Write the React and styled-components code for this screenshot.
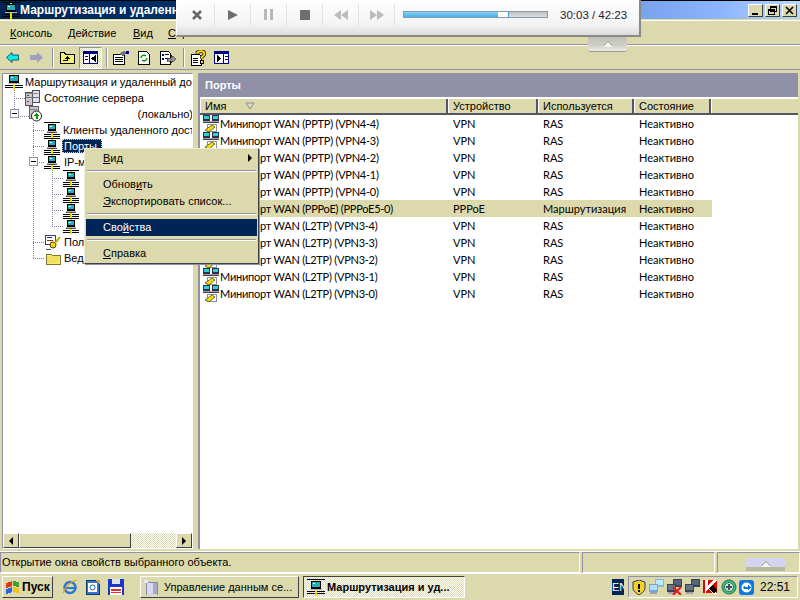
import React from "react";
import styled, { createGlobalStyle } from "styled-components";

const KHAKI = "#dcdaac";
const GREY = "#9090a8";
const NAVY = "#002456";
const dither = `repeating-conic-gradient(#fff 0 25%, ${KHAKI} 0 50%) 0 0 / 2px 2px`;

const GlobalStyle = createGlobalStyle`
  html, body { margin: 0; padding: 0; }
  body {
    width: 800px;
    height: 600px;
    overflow: hidden;
    background: ${KHAKI};
    font-family: "Liberation Sans", Arial, sans-serif;
    font-size: 11px;
    color: #000;
  }
  u { text-decoration: underline; }
`;

const ports = [
  ["Минипорт WAN (PPTP) (VPN4-4)", "VPN", "RAS"],
  ["Минипорт WAN (PPTP) (VPN4-3)", "VPN", "RAS"],
  ["Минипорт WAN (PPTP) (VPN4-2)", "VPN", "RAS"],
  ["Минипорт WAN (PPTP) (VPN4-1)", "VPN", "RAS"],
  ["Минипорт WAN (PPTP) (VPN4-0)", "VPN", "RAS"],
  ["Минипорт WAN (PPPoE) (PPPoE5-0)", "PPPoE", "Маршрутизация", true],
  ["Минипорт WAN (L2TP) (VPN3-4)", "VPN", "RAS"],
  ["Минипорт WAN (L2TP) (VPN3-3)", "VPN", "RAS"],
  ["Минипорт WAN (L2TP) (VPN3-2)", "VPN", "RAS"],
  ["Минипорт WAN (L2TP) (VPN3-1)", "VPN", "RAS"],
  ["Минипорт WAN (L2TP) (VPN3-0)", "VPN", "RAS"],
];

const Px = ({ w, h, children }) => (
  <svg width={w} height={h} viewBox={`0 0 ${w} ${h}`} shapeRendering="crispEdges" style={{ display: "block", flex: "none" }}>
    {children}
  </svg>
);

// monitor on a network line, used all over the tree
const NetIcon = () => (
  <Px w={16} h={16}>
    <rect x="0" y="0" width="16" height="1" fill="#000" />
    <rect x="7" y="1" width="2" height="1" fill="#f0e000" />
    <rect x="4" y="2" width="8" height="7" fill="#000" />
    <rect x="5" y="3" width="6" height="4" fill="#20b0b8" />
    <rect x="6" y="4" width="2" height="1" fill="#d8ffff" />
    <rect x="3" y="9" width="10" height="2" fill="#b8b8c0" />
    <rect x="3" y="10" width="10" height="1" fill="#505058" />
    <rect x="0" y="12" width="16" height="1" fill="#000" />
    <rect x="0" y="14" width="16" height="1" fill="#000" />
    <rect x="7" y="11" width="2" height="5" fill="#f0e000" />
  </Px>
);

const PortIcon = () => (
  <Px w={17} h={17}>
    <rect x="0" y="0" width="7" height="6" fill="#303048" />
    <rect x="1" y="1" width="5" height="3" fill="#30d0d8" />
    <rect x="9" y="0" width="7" height="6" fill="#303048" />
    <rect x="10" y="1" width="5" height="3" fill="#30d0d8" />
    <rect x="0" y="6" width="16" height="1" fill="#a0a0a8" />
    <rect x="0" y="7" width="16" height="1" fill="#404050" />
    <rect x="4" y="9" width="9" height="7" fill="#fff" stroke="#909098" />
    <polygon points="2,15 9,10 12,12 6,17" fill="#ecdc10" stroke="#403800" strokeWidth="0.7" shapeRendering="auto" />
  </Px>
);

const ServerIcon = () => (
  <Px w={16} h={17}>
    <rect x="1" y="3" width="7" height="13" fill="#c8c8d0" stroke="#505058" />
    <rect x="8" y="1" width="7" height="12" fill="#e0e0e8" stroke="#505058" />
    <rect x="2" y="8" width="13" height="1" fill="#707078" />
    <rect x="2" y="4" width="12" height="1" fill="#8c8c98" />
    <rect x="3" y="12" width="2" height="1" fill="#e02020" />
    <rect x="3" y="6" width="2" height="1" fill="#404048" />
  </Px>
);

const LocalIcon = () => (
  <Px w={14} h={16}>
    <rect x="1" y="0" width="9" height="12" fill="#c8c8d0" stroke="#606068" />
    <rect x="2" y="3" width="7" height="1" fill="#808088" />
    <circle cx="8.5" cy="10" r="5" fill="#fff" stroke="#202020" shapeRendering="auto" />
    <polygon points="8.5,6.5 11.5,10 9.5,10 9.5,12.5 7.5,12.5 7.5,10 5.5,10" fill="#00a000" />
  </Px>
);

const PolicyIcon = () => (
  <Px w={17} h={17}>
    <rect x="1" y="1" width="10" height="9" fill="#fff" stroke="#404080" />
    <rect x="3" y="3" width="5" height="1" fill="#2030a0" />
    <rect x="3" y="6" width="6" height="1" fill="#a02020" />
    <circle cx="9" cy="11" r="3" fill="#f0d800" stroke="#504000" shapeRendering="auto" />
    <line x1="11" y1="9" x2="16" y2="3" stroke="#c8b000" strokeWidth="2" shapeRendering="auto" />
    <line x1="2" y1="15" x2="7" y2="15" stroke="#505050" />
  </Px>
);

const FolderIcon = () => (
  <Px w={16} h={14}>
    <path d="M1 3h5l1 1h8v9H1z" fill="#f4ee70" stroke="#807830" />
    <rect x="2" y="5" width="12" height="7" fill="#f0e060" />
  </Px>
);

const ComputerIcon = () => (
  <Px w={18} h={17}>
    <rect x="0" y="0" width="18" height="1" fill="#000" />
    <rect x="8" y="1" width="2" height="1" fill="#f0e000" />
    <rect x="4" y="2" width="10" height="8" fill="#000" />
    <rect x="5" y="3" width="8" height="5" fill="#20b0b8" />
    <rect x="6" y="4" width="2" height="1" fill="#d8ffff" />
    <rect x="3" y="10" width="12" height="1" fill="#b8b8c0" />
    <rect x="0" y="12" width="18" height="1" fill="#000" />
    <rect x="0" y="14" width="18" height="1" fill="#000" />
    <rect x="8" y="11" width="2" height="6" fill="#f0e000" />
  </Px>
);

const BackIcon = () => (
  <Px w={13} h={11}>
    <polygon points="0.5,5.5 6,0.5 6,3 12.5,3 12.5,8 6,8 6,10.5" fill="#00f0f0" stroke="#003840" strokeWidth="0.8" shapeRendering="auto" />
  </Px>
);

const ForwardIcon = () => (
  <Px w={13} h={11}>
    <polygon points="13,5.5 7,0 7,3 0,3 0,8 7,8 7,11" fill="#a0a0c4" shapeRendering="auto" />
  </Px>
);

const FolderUpIcon = () => (
  <Px w={16} h={13}>
    <path d="M1.5 1.5h4l1 2h9v9h-14z" fill="#f8f070" stroke="#000" />
    <path d="M8 5l3 3h-2v2h-5v-1h4v-1h-2z" fill="#000" />
  </Px>
);

const PaneIcon = ({ right }) => (
  <Px w={15} h={13}>
    <rect x="0.5" y="0.5" width="14" height="12" fill="#fff" stroke="#000080" />
    <rect x="1" y="1" width="13" height="2" fill="#000080" />
    <rect x={right ? 9 : 6} y="1" width="1" height="11" fill="#000080" />
    {right ? (
      <polygon points="3,4 7,7.500 3,11" fill="#000" />
    ) : (
      <polygon points="13,4 8,7.500 13,11" fill="#000" />
    )}
    <rect x={right ? 11 : 2} y="5" width="3" height="1" fill="#000080" />
    <rect x={right ? 11 : 2} y="8" width="3" height="1" fill="#000080" />
  </Px>
);

const PropsIcon = () => (
  <Px w={16} h={14}>
    <rect x="0.5" y="3.5" width="11" height="10" fill="#fff" stroke="#000" />
    <rect x="2" y="6" width="8" height="1" fill="#000" />
    <rect x="2" y="8" width="8" height="1" fill="#000" />
    <rect x="2" y="10" width="8" height="1" fill="#000" />
    <polygon points="6,3 11,0 14,2 10,5" fill="#707080" />
    <rect x="13" y="0" width="3" height="3" fill="#000090" />
  </Px>
);

const RefreshIcon = () => (
  <Px w={12} h={14}>
    <path d="M0.5 0.500h8l3 3v10h-11z" fill="#fff" stroke="#000" />
    <path d="M3 7a3 3 0 0 1 5-2M9 7a3 3 0 0 1-5 2" fill="none" stroke="#009000" strokeWidth="1.4" shapeRendering="auto" />
  </Px>
);

const ExportIcon = () => (
  <Px w={16} h={14}>
    <path d="M0.5 0.500h8l2 2v11h-10z" fill="#fff" stroke="#000" />
    <rect x="2" y="3" width="2" height="2" fill="#0000a0" />
    <rect x="2" y="7" width="2" height="2" fill="#0000a0" />
    <rect x="5" y="3" width="4" height="1" fill="#000" />
    <rect x="5" y="7" width="3" height="1" fill="#000" />
    <polygon points="7,7 11,7 11,4 16,8 11,12 11,10 7,10" fill="#909098" stroke="#000" strokeWidth="0.5" />
  </Px>
);

const HelpIcon = () => (
  <Px w={15} h={16}>
    <path d="M0.5 4.500h8l2 2v9h-10z" fill="#fff" stroke="#000" />
    <rect x="2" y="8" width="5" height="1" fill="#000" />
    <rect x="2" y="10" width="5" height="1" fill="#000" />
    <rect x="2" y="12" width="5" height="1" fill="#000" />
    <path d="M6 3.500C6 1 13 0 13.500 3.500C13.500 6 10.500 6 10.500 8.500" fill="none" stroke="#000" strokeWidth="3.400" shapeRendering="auto" />
    <path d="M6 3.500C6 1 13 0 13.500 3.500C13.500 6 10.500 6 10.500 8.500" fill="none" stroke="#ffe000" strokeWidth="1.800" shapeRendering="auto" />
    <rect x="9" y="10" width="3" height="3" fill="#ffe000" stroke="#000" />
  </Px>
);

const FlagIcon = () => (
  <Px w={15} h={14}>
    <path d="M1 3l6-2v5l-6 2z" fill="#e03818" />
    <path d="M8 1l6 1v5l-6-1z" fill="#40a030" />
    <path d="M1 9l6-2v5l-6 2z" fill="#2868d8" />
    <path d="M8 7l6 1v5l-6-1z" fill="#f0c020" />
  </Px>
);

const IeIcon = () => (
  <Px w={16} h={16}>
    <circle cx="8" cy="8.500" r="5.500" fill="none" stroke="#2878d8" strokeWidth="2.500" shapeRendering="auto" />
    <rect x="4" y="8" width="9" height="1.500" fill="#2878d8" />
    <path d="M1 14C3 8 9 2 15 1" fill="none" stroke="#e8a020" strokeWidth="1.200" shapeRendering="auto" />
  </Px>
);

const OutlookIcon = () => (
  <Px w={16} h={16}>
    <rect x="1" y="1" width="13" height="14" fill="#3078d0" stroke="#103870" />
    <rect x="3" y="4" width="9" height="9" fill="#fff" />
    <circle cx="7.500" cy="8.500" r="2.500" fill="none" stroke="#2060c0" shapeRendering="auto" />
    <polygon points="10,1 15,1 15,6" fill="#f0a030" />
  </Px>
);

const FloppyIcon = () => (
  <Px w={16} h={16}>
    <rect x="0" y="0" width="16" height="16" fill="#1838c8" />
    <rect x="4" y="0" width="8" height="5" fill="#e0e0e8" />
    <rect x="2" y="8" width="12" height="8" fill="#fff" />
    <rect x="3" y="10" width="10" height="2" fill="#e03030" />
    <rect x="3" y="13" width="10" height="1" fill="#e03030" />
  </Px>
);

const MmcIcon = () => (
  <Px w={15} h={15}>
    <rect x="2" y="2" width="11" height="13" fill="#d8d8f0" stroke="#8888a8" />
    <rect x="9" y="3" width="4" height="11" fill="#a8a8c8" />
    <rect x="0" y="0" width="4" height="3" fill="#e8e8f8" />
  </Px>
);

const ShieldIcon = () => (
  <Px w={15} h={15}>
    <path d="M7 0l6 2v6c0 3-3 5-6 7-3-2-6-4-6-7V2z" fill="#f4d020" stroke="#283880" shapeRendering="auto" />
    <rect x="6" y="4" width="2" height="5" fill="#000" />
    <rect x="6" y="10" width="2" height="2" fill="#000" />
  </Px>
);

const TrayNetIcon = ({ light, cross }) => (
  <Px w={16} h={16}>
    <rect x="6" y="0" width="9" height="8" fill={light ? "#80b8e8" : "#404050"} />
    <rect x="7" y="1" width="7" height="5" fill={light ? "#c0e8ff" : "#506878"} />
    <rect x="0" y="5" width="9" height="8" fill={light ? "#70a8d8" : "#404050"} />
    <rect x="1" y="6" width="7" height="5" fill={light ? "#b0e0f8" : "#607888"} />
    <rect x="1" y="13" width="7" height="2" fill="#a0a0a8" />
    {cross && <path d="M6 8l8 8M14 8l-8 8" stroke="#e02020" strokeWidth="2.200" shapeRendering="auto" />}
  </Px>
);

const KasperskyIcon = () => (
  <Px w={16} h={15}>
    <rect x="0" y="0" width="14" height="13" fill="#e80000" />
    <polygon points="2,0 5,0 5,5 10,0 14,0 7,7 14,14 10,14 5,9 2,14" fill="#fff" />
    <polygon points="6,8 10,5 14,10 11,14" fill="#000" />
  </Px>
);

const GreenIcon = () => (
  <Px w={16} h={16}>
    <circle cx="8" cy="8" r="7" fill="#40c080" stroke="#207050" shapeRendering="auto" />
    <circle cx="8" cy="8" r="4.500" fill="#d0e8d8" stroke="#307050" shapeRendering="auto" />
    <path d="M5 8h6M8 5v6" stroke="#405060" strokeWidth="1.500" />
  </Px>
);

const TeamIcon = () => (
  <Px w={15} h={15}>
    <rect x="0" y="0" width="15" height="15" rx="3" fill="#1078e0" shapeRendering="auto" />
    <circle cx="7.500" cy="7.500" r="5" fill="#fff" shapeRendering="auto" />
    <polygon points="3.500,7.500 6,5 6,6.500 9,6.500 9,5 11.500,7.500 9,10 9,8.500 6,8.500 6,10" fill="#1078e0" />
  </Px>
);

const Screen = styled.div`
  position: relative;
  width: 800px;
  height: 600px;
  display: flex;
  flex-direction: column;
  background: ${KHAKI};
  overflow: hidden;
`;

const TitleBar = styled.div`
  height: 19px;
  flex: none;
  display: flex;
  align-items: center;
  padding: 0 3px 0 2px;
  border-top: 1px solid #000;
  box-sizing: border-box;
  background: linear-gradient(90deg, #002456 0%, #00306a 25%, #5080c8 60%, #8cb4ff 90%, #b8d8ff 100%);
  color: #fff;
  font-weight: bold;
  font-size: 12px;
`;

const TitleText = styled.span`
  flex: 1;
  white-space: nowrap;
`;

const WinButton = styled.div`
  width: 15px;
  height: 13px;
  margin-left: 2px;
  background: ${KHAKI};
  border: 1px solid;
  border-color: #fff #404040 #404040 #fff;
  box-sizing: border-box;
  display: flex;
  align-items: center;
  justify-content: center;
`;

const Band = styled.div`
  height: ${(p) => p.$h}px;
  flex: none;
  margin: ${(p) => p.$m || "0"};
  display: flex;
  align-items: center;
  box-sizing: border-box;
  border-top: 1px solid #fff;
  border-bottom: 1px solid ${GREY};
  padding-left: ${(p) => p.$pl || 0}px;
`;

const MenuItem = styled.span`
  width: ${(p) => p.$w}px;
  flex: none;
  white-space: nowrap;
`;

const ToolSlot = styled.div`
  flex: none;
  width: ${(p) => p.$w}px;
  height: 22px;
  display: flex;
  align-items: center;
  justify-content: center;
  box-sizing: border-box;
  ${(p) =>
    p.$active &&
    `background: ${dither};
     border: 1px solid;
     border-color: ${GREY} #fff #fff ${GREY};`}
`;

const ToolSep = styled.div`
  flex: none;
  width: 2px;
  height: 19px;
  margin: 0 ${(p) => p.$r ?? 0}px 0 ${(p) => p.$l ?? 0}px;
  background: linear-gradient(90deg, ${GREY} 50%, #fff 50%);
`;

const Main = styled.div`
  flex: 1;
  min-height: 0;
  display: flex;
  margin: 3px 2px 2px;
  gap: 5px;
`;

const TreePane = styled.div`
  position: relative;
  width: 191px;
  flex: none;
  display: flex;
  flex-direction: column;
  box-sizing: border-box;
  background: #fff;
  border: 1px solid;
  border-color: ${GREY} #fff #fff ${GREY};
  overflow: hidden;
`;

const TreeBody = styled.div`
  position: relative;
  flex: 1;
  min-height: 0;
`;

const TreeLines = styled.svg`
  position: absolute;
  left: 0;
  top: 0;
`;

const TreeRow = styled.div`
  position: relative;
  height: ${(p) => p.$h || 16}px;
  display: flex;
  align-items: center;
  gap: ${(p) => p.$gap ?? 3}px;
  padding-left: ${(p) => p.$indent}px;
  white-space: nowrap;
`;

const Expander = styled.span`
  position: absolute;
  left: ${(p) => p.$x}px;
  top: 3px;
  width: 9px;
  height: 9px;
  box-sizing: border-box;
  background: #fff;
  border: 1px solid ${GREY};
  &::after {
    content: "";
    position: absolute;
    left: 1px;
    top: 3px;
    width: 5px;
    height: 1px;
    background: #000;
  }
`;

const TreeLabel = styled.span`
  padding: 1px 2px;
  ${(p) =>
    p.$selected &&
    `background: ${NAVY};
     color: #fff;
     padding-right: 5px;
     outline: 1px dotted #dcdaac;
     outline-offset: -1px;`}
`;

const LocalLabel = styled.span`
  position: absolute;
  right: -1px;
`;

const ScrollBar = styled.div`
  height: 15px;
  flex: none;
  display: flex;
  background: ${dither};
`;

const ScrollButton = styled.div`
  width: ${(p) => p.$w || 16}px;
  flex: none;
  margin-left: ${(p) => (p.$end ? "auto" : "0")};
  box-sizing: border-box;
  background: ${KHAKI};
  border: 1px solid;
  border-color: #fff #404048 #404048 #fff;
  display: flex;
  align-items: center;
  justify-content: center;
`;

const ScrollArrow = styled.i`
  width: 0;
  height: 0;
  border-style: solid;
  border-width: 4px 0 4px 4px;
  border-color: transparent transparent transparent #000;
  transform: ${(p) => (p.$left ? "scaleX(-1)" : "none")};
`;

const ListPane = styled.div`
  flex: 1;
  min-width: 0;
  display: flex;
  flex-direction: column;
  background: #fff;
  border-left: 2px solid ${GREY};
`;

const PaneHeader = styled.div`
  height: 23px;
  flex: none;
  display: flex;
  align-items: center;
  padding: 0 0 1px 5px;
  box-sizing: content-box;
  background: ${GREY};
  color: #fff;
  font-weight: bold;
  border-bottom: 1px solid #fff;
`;

const ColumnRow = styled.div`
  display: grid;
  grid-template-columns: 248px 90px 96px 77px 1fr;
  height: 17px;
  flex: none;
  background: ${KHAKI};
  box-sizing: border-box;
  border-top: 1px solid #fff;
  border-bottom: 2px solid #555568;
`;

const Column = styled.div`
  display: flex;
  align-items: center;
  gap: 19px;
  padding-left: 5px;
  border-right: 2px solid #555568;
  box-shadow: inset 1px 0 0 #fff;
  &:last-child { border-right: 0; }
`;

const ListRow = styled.div`
  display: grid;
  grid-template-columns: 248px 90px 96px 78px;
  height: 17px;
  align-items: center;
  width: 512px;
  background: ${(p) => (p.$hl ? KHAKI : "transparent")};
  white-space: nowrap;
`;

const NameCell = styled.div`
  display: flex;
  align-items: center;
  padding-left: 3px;
  font-family: Lato, "Liberation Sans", Arial, sans-serif;
  letter-spacing: -0.25px;
`;

const Cell = styled.div`
  padding-left: 5px;
  font-family: Lato, "Liberation Sans", Arial, sans-serif;
`;

const StatusBar = styled.div`
  height: 23px;
  flex: none;
  display: grid;
  grid-template-columns: 580px 133px 1fr;
  gap: 2px;
  border-top: 1px solid #fff;
  border-bottom: 1px solid #fff;
  box-sizing: border-box;
`;

const StatusCell = styled.div`
  display: flex;
  align-items: center;
  padding: 0 0 1px 1px;
  border: 1px solid;
  border-color: ${GREY} #fff #fff ${GREY};
  white-space: nowrap;
`;

const Taskbar = styled.div`
  height: 26px;
  flex: none;
  display: flex;
  align-items: center;
  padding-left: 2px;
`;

const Raised = styled.div`
  height: 22px;
  box-sizing: border-box;
  display: flex;
  align-items: center;
  flex: none;
  background: ${KHAKI};
  border: 1px solid;
  border-color: #fff #404048 #404048 #fff;
`;

const StartButton = styled(Raised)`
  width: 51px;
  gap: 2px;
  padding-left: 2px;
  font-weight: bold;
  font-size: 12px;
`;

const Quick = styled.div`
  display: flex;
  gap: 7px;
  margin: 0 12px 0 9px;
  width: 66px;
  flex: none;
`;

const TaskButton = styled(Raised)`
  width: ${(p) => p.$w}px;
  margin-right: 4px;
  gap: ${(p) => (p.$active ? 2 : 5)}px;
  padding-left: 3px;
  white-space: nowrap;
  ${(p) =>
    p.$active &&
    `background: ${dither};
     border-color: #404048 #fff #fff #404048;
     font-weight: bold;`}
`;

const Lang = styled.div`
  margin-left: auto;
  width: 12px;
  height: 16px;
  overflow: hidden;
  background: ${NAVY};
  color: #fff;
  font-size: 11px;
  line-height: 16px;
  flex: none;
`;

const Tray = styled.div`
  width: 170px;
  height: 22px;
  box-sizing: border-box;
  margin: 0 2px 0 4px;
  padding-left: 3px;
  display: flex;
  align-items: center;
  gap: 2px;
  border: 1px solid;
  border-color: ${GREY} #fff #fff ${GREY};
`;

const Clock = styled.span`
  margin-left: auto;
  margin-right: 7px;
  font-size: 12px;
`;

const Player = styled.div`
  position: absolute;
  left: 176px;
  top: -2px;
  width: 465px;
  height: 39px;
  box-sizing: border-box;
  display: flex;
  align-items: center;
  padding: 0 0 5px 2px;
  background: linear-gradient(180deg, #ffffff 0%, #f4f4f4 70%, #dcdcdc 100%);
  border: 1px solid #fff;
  border-right: 2px solid #8a8a84;
  border-bottom: 2px solid #8a8a84;
  z-index: 3;
`;

const PlayerButton = styled.div`
  width: 36px;
  height: 22px;
  flex: none;
  display: flex;
  align-items: center;
  justify-content: center;
  box-sizing: border-box;
  border-right: 1px solid #e2e2e2;
  &:last-of-type { border-right: 0; }
`;

const Progress = styled.div`
  width: 145px;
  height: 7px;
  flex: none;
  margin-left: 8px;
  overflow: hidden;
  box-sizing: border-box;
  border: 1px solid #7f9db0;
  background: linear-gradient(180deg, #c0c0c0, #dedede);
  display: flex;
`;

const ProgressPart = styled.div`
  height: 100%;
  background: ${(p) => p.$color};
`;

const TimeLabel = styled.span`
  margin-left: 12px;
  font-size: 11.5px;
  color: #202030;
  white-space: nowrap;
`;

const PullTab = styled.div`
  position: absolute;
  left: 588px;
  top: 37px;
  width: 39px;
  height: 15px;
  box-sizing: border-box;
  background: linear-gradient(180deg, #c0c0b8 0%, #d0d0c8 60%, #ecece4 100%);
  border-bottom: 1px solid #9a9a90;
  border-radius: 0 0 3px 3px;
  display: flex;
  align-items: center;
  justify-content: center;
`;

const TabTriangle = styled.i`
  width: 0;
  height: 0;
  border-style: solid;
  border-width: 0 5px 5px 5px;
  border-color: transparent transparent #f4f4f4 transparent;
  filter: drop-shadow(0 -1px 0 #9a9a90);
`;

const StatusTab = styled.div`
  position: absolute;
  left: 746px;
  top: 558px;
  width: 39px;
  height: 13px;
  box-sizing: border-box;
  border-radius: 3px 3px 0 0;
  background: linear-gradient(180deg, #d4d4f0 0 70%, #b8b8a0 70%);
  display: flex;
  align-items: center;
  justify-content: center;
`;

const ContextMenu = styled.div`
  position: absolute;
  left: 84px;
  top: 148px;
  width: 175px;
  height: 116px;
  box-sizing: border-box;
  padding: 1px;
  background: ${KHAKI};
  border: 1px solid;
  border-color: #eeeedd #404048 #404048 #eeeedd;
  box-shadow: 1px 1px 0 ${GREY};
  z-index: 2;
`;

const MenuRow = styled.div`
  position: relative;
  height: 17px;
  line-height: 17px;
  padding-left: 17px;
  white-space: nowrap;
  ${(p) => p.$selected && `background: ${NAVY}; color: #fff;`}
`;

const MenuSep = styled.div`
  height: 2px;
  margin: ${(p) => p.$m} 1px ${(p) => p.$b};
  background: linear-gradient(180deg, ${GREY} 50%, #fff 50%);
`;

const SubArrow = styled.i`
  position: absolute;
  right: 5px;
  top: 4px;
  width: 0;
  height: 0;
  border-style: solid;
  border-width: 4px 0 4px 4px;
  border-color: transparent transparent transparent #000;
`;

export default function App() {
  return (
    <>
      <GlobalStyle />
      <Screen>
        <TitleBar>
          <ComputerIcon />
          <TitleText>Маршрутизация и удаленный доступ</TitleText>
          <WinButton>
            <Px w={9} h={9}><rect x="1" y="7" width="6" height="2" fill="#000" /></Px>
          </WinButton>
          <WinButton>
            <Px w={9} h={9}>
              <path d="M2.5 0.5h6v5h-6zM0.5 3.5h6v5h-6z" fill="none" stroke="#000" />
              <rect x="0" y="3" width="7" height="2" fill="#000" />
              <rect x="2" y="0" width="7" height="2" fill="#000" />
            </Px>
          </WinButton>
          <WinButton>
            <Px w={9} h={9}>
              <path d="M1 1l7 7M8 1l-7 7" stroke="#000" strokeWidth="1.6" shapeRendering="auto" />
            </Px>
          </WinButton>
        </TitleBar>
        <Band $h={25} $m="1px 0 0" $pl={10}>
          <MenuItem $w={58}><u>К</u>онсоль</MenuItem>
          <MenuItem $w={65}><u>Д</u>ействие</MenuItem>
          <MenuItem $w={35}><u>В</u>ид</MenuItem>
          <MenuItem $w={50}><u>С</u>правка</MenuItem>
        </Band>
        <Band $h={25} $pl={5}>
          <ToolSlot $w={15}><BackIcon /></ToolSlot>
          <ToolSlot $w={32}><ForwardIcon /></ToolSlot>
          <ToolSep />
          <ToolSlot $w={25}><FolderUpIcon /></ToolSlot>
          <ToolSlot $w={23} $active><PaneIcon /></ToolSlot>
          <ToolSep $l={4} $r={4} />
          <ToolSlot $w={17}><PropsIcon /></ToolSlot>
          <ToolSlot $w={30}><RefreshIcon /></ToolSlot>
          <ToolSlot $w={17}><ExportIcon /></ToolSlot>
          <ToolSep $l={7} $r={4} />
          <ToolSlot $w={18}><HelpIcon /></ToolSlot>
          <ToolSlot $w={28}><PaneIcon right /></ToolSlot>
        </Band>
        <Main>
          <TreePane>
            <TreeBody>
              <TreeLines width="190" height="200" viewBox="0 0 190 200" shapeRendering="crispEdges">
                <g stroke="#808098" strokeDasharray="1 1" fill="none">
                  <path d="M11 16V38M11 24H22M11 42H26" />
                  <path d="M30 49V185M30 56H41M30 72H41M30 88H41M30 168H41M30 184H41" />
                  <path d="M49 96V152M49 104H60M49 120H60M49 136H60M49 152H60" />
                </g>
              </TreeLines>
              <TreeRow $indent={2} $gap={0} $h={15}><ComputerIcon /><TreeLabel>Маршрутизация и удаленный доступ</TreeLabel></TreeRow>
              <TreeRow $indent={21} $gap={2} $h={17}><ServerIcon /><TreeLabel>Состояние сервера</TreeLabel></TreeRow>
              <TreeRow $indent={25} $h={16}>
                <Expander $x={7} />
                <LocalIcon />
                <LocalLabel>(локально)</LocalLabel>
              </TreeRow>
              <TreeRow $indent={41} $gap={1}><NetIcon /><TreeLabel>Клиенты удаленного доступа</TreeLabel></TreeRow>
              <TreeRow $indent={41} $gap={2}><NetIcon /><TreeLabel $selected>Порты</TreeLabel></TreeRow>
              <TreeRow $indent={41} $gap={2}>
                <Expander $x={26} />
                <NetIcon />
                <TreeLabel>IP-маршрутизация</TreeLabel>
              </TreeRow>
              {[0, 1, 2, 3].map((i) => (
                <TreeRow key={i} $indent={60}><NetIcon /></TreeRow>
              ))}
              <TreeRow $indent={41} $gap={1}><PolicyIcon /><TreeLabel>Политика</TreeLabel></TreeRow>
              <TreeRow $indent={42} $gap={1}><FolderIcon /><TreeLabel>Ведение журнала</TreeLabel></TreeRow>
            </TreeBody>
            <ScrollBar>
              <ScrollButton><ScrollArrow $left /></ScrollButton>
              <ScrollButton $w={112} />
              <ScrollButton $end><ScrollArrow /></ScrollButton>
            </ScrollBar>
          </TreePane>
          <ListPane>
            <PaneHeader>Порты</PaneHeader>
            <ColumnRow>
              <Column>
                Имя
                <svg width="10" height="8" viewBox="0 0 10 8"><path d="M1 1h8L5 7z" fill="#dcdaac" stroke="#8c8ca4" /></svg>
              </Column>
              <Column>Устройство</Column>
              <Column>Используется</Column>
              <Column>Состояние</Column>
              <Column />
            </ColumnRow>
            {ports.map(([name, device, used, hl]) => (
              <ListRow key={name} $hl={hl}>
                <NameCell><PortIcon />{name}</NameCell>
                <Cell>{device}</Cell>
                <Cell>{used}</Cell>
                <Cell>Неактивно</Cell>
              </ListRow>
            ))}
          </ListPane>
        </Main>
        <StatusBar>
          <StatusCell>Открытие окна свойств выбранного объекта.</StatusCell>
          <StatusCell />
          <StatusCell />
        </StatusBar>
        <Taskbar>
          <StartButton><FlagIcon />Пуск</StartButton>
          <Quick><IeIcon /><OutlookIcon /><FloppyIcon /></Quick>
          <TaskButton $w={159}><MmcIcon />Управление данным се...</TaskButton>
          <TaskButton $w={162} $active><ComputerIcon />Маршрутизация и уд...</TaskButton>
          <Lang>EN</Lang>
          <Tray>
            <ShieldIcon />
            <TrayNetIcon light />
            <TrayNetIcon cross />
            <TrayNetIcon />
            <KasperskyIcon />
            <GreenIcon />
            <TeamIcon />
            <Clock>22:51</Clock>
          </Tray>
        </Taskbar>

        <Player>
          <PlayerButton>
            <svg width="12" height="12" viewBox="0 0 12 12"><path d="M2 2l8 8M10 2l-8 8" stroke="#666" strokeWidth="2.6" /></svg>
          </PlayerButton>
          <PlayerButton>
            <svg width="10" height="12" viewBox="0 0 10 12"><path d="M0 1l10 5-10 5z" fill="#6e6e6e" /></svg>
          </PlayerButton>
          <PlayerButton>
            <svg width="9" height="11" viewBox="0 0 9 11"><path d="M0 0h3v11H0zM6 0h3v11H6z" fill="#b8b8b8" /></svg>
          </PlayerButton>
          <PlayerButton>
            <svg width="10" height="10" viewBox="0 0 10 10"><rect width="10" height="10" fill="#6e6e6e" /></svg>
          </PlayerButton>
          <PlayerButton>
            <svg width="14" height="10" viewBox="0 0 14 10"><path d="M7 0v10L0 5zM14 0v10L7 5z" fill="#bcbcbc" /></svg>
          </PlayerButton>
          <PlayerButton>
            <svg width="14" height="10" viewBox="0 0 14 10"><path d="M0 0v10l7-5zM7 0v10l7-5z" fill="#bcbcbc" /></svg>
          </PlayerButton>
          <Progress>
            <ProgressPart $color="linear-gradient(180deg,#8ad0f4,#48aee8)" style={{ width: "65.5%" }} />
            <ProgressPart $color="#fff" style={{ width: "7%", borderRight: "1px solid #4a90c0" }} />
          </Progress>
          <TimeLabel>30:03 / 42:23</TimeLabel>
        </Player>
        <PullTab><TabTriangle /></PullTab>

        <ContextMenu>
          <MenuRow><u>В</u>ид<SubArrow /></MenuRow>
          <MenuSep $m="3px" $b="4px" />
          <MenuRow>Обнов<u>и</u>ть</MenuRow>
          <MenuRow><u>Э</u>кспортировать список...</MenuRow>
          <MenuSep $m="3px" $b="4px" />
          <MenuRow $selected>Сво<u>й</u>ства</MenuRow>
          <MenuSep $m="3px" $b="4px" />
          <MenuRow><u>С</u>правка</MenuRow>
        </ContextMenu>
        <StatusTab><TabTriangle /></StatusTab>
      </Screen>
    </>
  );
}
